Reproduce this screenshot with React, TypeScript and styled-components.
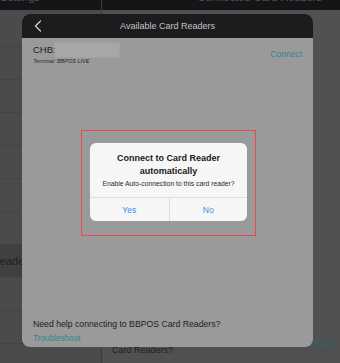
import React from 'react';
import styled, { createGlobalStyle } from 'styled-components';

const GlobalStyle = createGlobalStyle`
  html, body {
    margin: 0;
    padding: 0;
    background: #4f5052;
  }
  body {
    font-family: "Liberation Sans", Arial, sans-serif;
  }
`;

const Screen = styled.div`
  position: relative;
  width: 340px;
  height: 363px;
  overflow: hidden;
  background: #4f5052;
`;

/* ---------- background split view (dimmed) ---------- */

const Split = styled.div`
  display: grid;
  grid-template-columns: 101px 1px 1fr;
  height: 100%;
`;

const Column = styled.div`
  display: flex;
  flex-direction: column;
  min-width: 0;
  overflow: hidden;
`;

const Divider = styled.div`
  background: #3b3c3e;
`;

const NavBar = styled.div<{ align: 'left' | 'right' }>`
  flex: none;
  height: 10px;
  background: #151517;
  color: #55565a;
  font-size: 11px;
  line-height: 11px;
  white-space: nowrap;
  overflow: hidden;
  text-align: ${p => p.align};
  padding: 0 18px 0 0;
  span {
    display: block;
    margin-top: -8px;
  }
`;

const SideList = styled.div`
  display: flex;
  flex-direction: column;
  padding-top: 4px;
  background: #4a4b4d;
  flex: 1;
`;

const SideRow = styled.div<{ active?: boolean }>`
  flex: none;
  height: 32px;
  border-bottom: 1px solid #434446;
  background: ${p => (p.active ? '#3f4042' : 'transparent')};
  color: #1e1e20;
  font-size: 11px;
  display: flex;
  align-items: center;
  white-space: nowrap;
  overflow: hidden;
`;

const SideLabel = styled.span`
  margin-left: -35px;
`;

const Detail = styled.div`
  flex: 1;
  display: flex;
  flex-direction: column;
  justify-content: flex-end;
  padding: 0 8px 7px 10px;
`;

const DetailHelp = styled.div`
  display: flex;
  justify-content: space-between;
  align-items: flex-start;
  font-size: 9px;
  line-height: 11px;
  color: #1f1f21;
`;

const DetailLink = styled.span`
  color: #2b6870;
  font-size: 9px;
  line-height: 11px;
  margin-top: 4px;
`;

/* ---------- modal sheet ---------- */

const Sheet = styled.div`
  position: absolute;
  left: 22px;
  top: 14px;
  width: 291px;
  height: 333px;
  border-radius: 8px;
  overflow: hidden;
  display: flex;
  flex-direction: column;
  background: #9a9a9a;
`;

const SheetHeader = styled.div`
  flex: none;
  height: 24px;
  background: #1c1c1e;
  display: grid;
  grid-template-columns: 30px 1fr 30px;
  align-items: center;
`;

const BackButton = styled.div`
  display: flex;
  align-items: center;
  justify-content: center;
  padding-left: 1px;
`;

const SheetTitle = styled.div`
  text-align: center;
  color: #c4c4c6;
  font-size: 9px;
`;

const SheetBody = styled.div`
  flex: 1;
  display: flex;
  flex-direction: column;
  padding: 5px 11px 4px 11px;
`;

const ReaderRow = styled.div`
  display: flex;
  justify-content: space-between;
  align-items: center;
`;

const ReaderInfo = styled.div`
  display: flex;
  flex-direction: column;
`;

const ReaderName = styled.div`
  display: flex;
  align-items: center;
  font-size: 9.5px;
  color: #1d1d1f;
  line-height: 14px;
`;

const Redacted = styled.span`
  display: inline-block;
  width: 64px;
  height: 14px;
  margin-left: -1px;
  background: #a7a7a7;
  box-shadow: 0 0 1px 1px rgba(167, 167, 167, 0.5);
`;

const ReaderMeta = styled.div`
  font-size: 5.5px;
  font-style: italic;
  color: #2a2a2c;
  margin-top: 1px;
`;

const TealLink = styled.span<{ size: number }>`
  color: #2f8791;
  font-size: ${p => p.size}px;
`;

const Spacer = styled.div`
  flex: 1;
`;

const HelpText = styled.div`
  font-size: 8.7px;
  color: #202022;
  margin-bottom: 5px;
`;

/* ---------- alert with red annotation ---------- */

const Highlight = styled.div`
  position: absolute;
  left: 81px;
  top: 130px;
  width: 175px;
  height: 106px;
  box-sizing: border-box;
  border: 1px solid #f04848;
  padding: 12px 0 0 8px;
`;

const Alert = styled.div`
  width: 157px;
  height: 78px;
  border-radius: 6px;
  background: #f6f6f6;
  display: flex;
  flex-direction: column;
  overflow: hidden;
`;

const AlertContent = styled.div`
  flex: 1;
  display: flex;
  flex-direction: column;
  align-items: center;
  padding-top: 9px;
  text-align: center;
`;

const AlertTitle = styled.div`
  font-size: 9px;
  font-weight: 700;
  line-height: 12.5px;
  color: #1a1a1a;
`;

const AlertMessage = styled.div`
  font-size: 6.8px;
  color: #2a2a2a;
  margin-top: 3px;
  white-space: nowrap;
`;

const AlertActions = styled.div`
  flex: none;
  height: 23px;
  display: grid;
  grid-template-columns: 1fr 1fr;
  border-top: 1px solid #dedede;
`;

const AlertButton = styled.div<{ divided?: boolean }>`
  display: flex;
  align-items: center;
  justify-content: center;
  color: #3d8ee8;
  font-size: 8.5px;
  border-left: ${p => (p.divided ? '1px solid #dedede' : 'none')};
`;

const sideRows = ['', '', '', '', '', '', '', 'Card Readers', '', '', ''];

export default function App() {
  return (
    <>
      <GlobalStyle />
      <Screen>
        <Split>
          <Column>
            <NavBar align="left">
              <span>Settings</span>
            </NavBar>
            <SideList>
              {sideRows.map((label, i) => (
                <SideRow key={i} active={label !== ''}>
                  {label && <SideLabel>{label}</SideLabel>}
                </SideRow>
              ))}
            </SideList>
          </Column>
          <Divider />
          <Column>
            <NavBar align="right">
              <span>Connected Card Readers</span>
            </NavBar>
            <Detail>
              <DetailHelp>
                <span>
                  Need help connecting to BBPOS
                  <br />
                  Card Readers?
                </span>
                <DetailLink>Troubleshoot</DetailLink>
              </DetailHelp>
            </Detail>
          </Column>
        </Split>

        <Sheet>
          <SheetHeader>
            <BackButton>
              <svg width="8" height="12" viewBox="0 0 8 12">
                <polyline
                  points="6.5,1 1.5,6 6.5,11"
                  fill="none"
                  stroke="#cfcfd1"
                  strokeWidth="1.3"
                  strokeLinecap="round"
                  strokeLinejoin="round"
                />
              </svg>
            </BackButton>
            <SheetTitle>Available Card Readers</SheetTitle>
            <div />
          </SheetHeader>
          <SheetBody>
            <ReaderRow>
              <ReaderInfo>
                <ReaderName>
                  CHB:
                  <Redacted />
                </ReaderName>
                <ReaderMeta>Terminal: BBPOS LIVE</ReaderMeta>
              </ReaderInfo>
              <TealLink size={8.5}>Connect</TealLink>
            </ReaderRow>
            <Spacer />
            <HelpText>Need help connecting to BBPOS Card Readers?</HelpText>
            <TealLink size={8.2}>Troubleshoot</TealLink>
          </SheetBody>
        </Sheet>

        <Highlight>
          <Alert>
            <AlertContent>
              <AlertTitle>
                Connect to Card Reader
                <br />
                automatically
              </AlertTitle>
              <AlertMessage>Enable Auto-connection to this card reader?</AlertMessage>
            </AlertContent>
            <AlertActions>
              <AlertButton>Yes</AlertButton>
              <AlertButton divided>No</AlertButton>
            </AlertActions>
          </Alert>
        </Highlight>
      </Screen>
    </>
  );
}
